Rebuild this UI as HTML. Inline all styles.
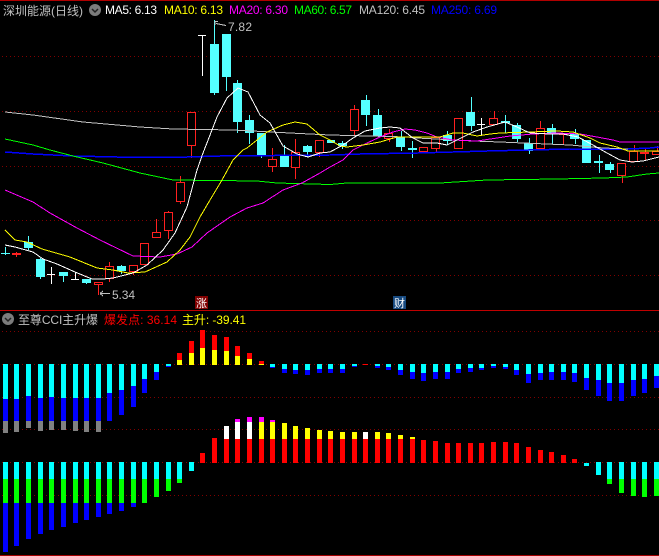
<!DOCTYPE html>
<html lang="zh">
<head>
<meta charset="utf-8">
<title>深圳能源</title>
<style>
html,body{margin:0;padding:0;background:#000;width:659px;height:556px;overflow:hidden}
svg{display:block}
text{font-family:"Liberation Sans","WenQuanYi Zen Hei","Noto Sans CJK SC",sans-serif;font-size:12px}
</style>
</head>
<body>
<svg width="659" height="556" viewBox="0 0 659 556" xmlns="http://www.w3.org/2000/svg">
<rect width="659" height="556" fill="#000"/>
<!-- grid -->
<g stroke="#800000" stroke-width="1" stroke-dasharray="1 3" shape-rendering="crispEdges">
<path d="M2 56.500H659M2 111.500H659M2 166.500H659M2 220.500H659M2 275.500H659M2 331.500H659M2 364.500H659M2 397.500H659M2 429.500H659M2 462.500H659M2 495.500H659"/>
</g>
<rect x="0" y="0" width="659" height="1" fill="#b00000"/>
<rect x="0" y="310" width="659" height="1" fill="#c00000"/>
<rect x="0" y="555" width="659" height="1" fill="#a00000"/>

<!-- lower panel A -->
<g shape-rendering="crispEdges">
<path fill="#808080" d="M3 421h5v12h-5zM14 421h5v11h-5zM26 421h5v7h-5zM38 421h5v10h-5zM49 421h5v9h-5zM61 421h5v9h-5zM73 421h5v10h-5zM84 421h5v11h-5zM96 421h5v11h-5z"/>
<path fill="#00ffff" d="M3 364h5v35h-5zM14 364h5v35h-5zM26 364h5v32h-5zM38 364h5v34h-5zM49 364h5v33h-5zM61 364h5v34h-5zM73 364h5v34h-5zM84 364h5v34h-5zM96 364h5v34h-5zM107 364h5v29h-5zM119 364h5v26h-5zM131 364h5v22h-5zM142 364h5v15h-5zM154 364h5v8h-5zM166 364h5v2h-5zM270 364h5v3h-5zM282 364h5v5h-5zM293 364h5v6h-5zM305 364h5v6h-5zM317 364h5v5h-5zM328 364h5v5h-5zM340 364h5v5h-5zM352 364h5v2h-5zM375 364h5v2h-5zM386 364h5v3h-5zM398 364h5v6h-5zM410 364h5v8h-5zM421 364h5v9h-5zM433 364h5v8h-5zM445 364h5v8h-5zM456 364h5v5h-5zM468 364h5v4h-5zM479 364h5v4h-5zM491 364h5v2h-5zM503 364h5v3h-5zM514 364h5v6h-5zM526 364h5v10h-5zM538 364h5v9h-5zM549 364h5v8h-5zM561 364h5v8h-5zM572 364h5v9h-5zM584 364h5v14h-5zM596 364h5v16h-5zM607 364h5v19h-5zM619 364h5v19h-5zM631 364h5v16h-5zM642 364h5v15h-5zM654 364h5v12h-5z"/>
<path fill="#0000ff" d="M3 399h5v22h-5zM14 399h5v22h-5zM26 396h5v25h-5zM38 398h5v23h-5zM49 397h5v24h-5zM61 398h5v23h-5zM73 398h5v23h-5zM84 398h5v23h-5zM96 398h5v23h-5zM107 393h5v28h-5zM119 390h5v25h-5zM131 386h5v21h-5zM142 379h5v14h-5zM154 372h5v8h-5zM166 366h5v1h-5zM270 367h5v1h-5zM282 369h5v4h-5zM293 370h5v4h-5zM305 370h5v5h-5zM317 369h5v4h-5zM328 369h5v4h-5zM340 369h5v4h-5zM352 366h5v1h-5zM375 366h5v2h-5zM386 367h5v3h-5zM398 370h5v5h-5zM410 372h5v7h-5zM421 373h5v8h-5zM433 372h5v7h-5zM445 372h5v7h-5zM456 369h5v4h-5zM468 368h5v4h-5zM479 368h5v2h-5zM491 366h5v2h-5zM503 367h5v2h-5zM514 370h5v5h-5zM526 374h5v9h-5zM538 373h5v7h-5zM549 372h5v8h-5zM561 372h5v8h-5zM572 373h5v9h-5zM584 378h5v12h-5zM596 380h5v16h-5zM607 383h5v18h-5zM619 383h5v18h-5zM631 380h5v16h-5zM642 379h5v14h-5zM654 376h5v12h-5z"/>
<path fill="#ff0000" d="M177 353h5v7h-5zM189 341h5v12h-5zM200 330h5v18h-5zM212 335h5v15h-5zM224 337h5v14h-5zM235 346h5v10h-5zM247 353h5v6h-5zM259 361h5v3h-5zM363 364h5v1h-5z"/>
<path fill="#ffff00" d="M177 360h5v5h-5zM189 353h5v12h-5zM200 348h5v17h-5zM212 350h5v15h-5zM224 351h5v14h-5zM235 356h5v9h-5zM247 359h5v6h-5zM259 364h5v1h-5z"/>
<!-- lower panel B -->
<path fill="#00ffff" d="M3 462h5v17h-5zM14 462h5v17h-5zM26 462h5v17h-5zM38 462h5v17h-5zM49 462h5v17h-5zM61 462h5v17h-5zM73 462h5v17h-5zM84 462h5v17h-5zM96 462h5v17h-5zM107 462h5v17h-5zM119 462h5v17h-5zM131 462h5v17h-5zM142 462h5v17h-5zM154 462h5v17h-5zM166 462h5v17h-5zM177 462h5v17h-5zM189 462h5v9h-5zM584 463h5v3h-5zM596 462h5v13h-5zM607 462h5v17h-5zM619 462h5v17h-5zM631 462h5v17h-5zM642 462h5v17h-5zM654 462h5v17h-5z"/>
<path fill="#00ff00" d="M3 479h5v24h-5zM14 479h5v24h-5zM26 479h5v24h-5zM38 479h5v24h-5zM49 479h5v24h-5zM61 479h5v24h-5zM73 479h5v24h-5zM84 479h5v24h-5zM96 479h5v24h-5zM107 479h5v24h-5zM119 479h5v24h-5zM131 479h5v24h-5zM142 479h5v24h-5zM154 479h5v18h-5zM166 479h5v12h-5zM177 479h5v4h-5zM607 479h5v5h-5zM619 479h5v14h-5zM631 479h5v17h-5zM642 479h5v18h-5zM654 479h5v17h-5z"/>
<path fill="#0000ff" d="M3 503h5v49h-5zM14 503h5v43h-5zM26 503h5v36h-5zM38 503h5v31h-5zM49 503h5v27h-5zM61 503h5v24h-5zM73 503h5v20h-5zM84 503h5v17h-5zM96 503h5v14h-5zM107 503h5v11h-5zM119 503h5v8h-5zM131 503h5v4h-5z"/>
<path fill="#ff0000" d="M200 453h5v10h-5zM212 438h5v25h-5zM224 439h5v24h-5zM235 439h5v24h-5zM247 439h5v24h-5zM259 439h5v24h-5zM270 439h5v24h-5zM282 439h5v24h-5zM293 439h5v24h-5zM305 439h5v24h-5zM317 439h5v24h-5zM328 439h5v24h-5zM340 439h5v24h-5zM352 439h5v24h-5zM363 439h5v24h-5zM375 439h5v24h-5zM386 439h5v24h-5zM398 439h5v24h-5zM410 439h5v24h-5zM421 440h5v23h-5zM433 441h5v22h-5zM445 443h5v20h-5zM456 443h5v20h-5zM468 443h5v20h-5zM479 443h5v20h-5zM491 442h5v21h-5zM503 442h5v21h-5zM514 443h5v20h-5zM526 447h5v16h-5zM538 450h5v13h-5zM549 452h5v11h-5zM561 455h5v8h-5zM572 459h5v4h-5z"/>
<path fill="#ffffff" d="M224 426h5v13h-5zM235 422h5v17h-5zM247 422h5v17h-5zM363 432h5v7h-5z"/>
<path fill="#ff00ff" d="M235 419h5v3h-5zM247 417h5v5h-5zM259 417h5v5h-5zM270 420h5v2h-5z"/>
<path fill="#ffff00" d="M259 422h5v17h-5zM270 422h5v17h-5zM282 423h5v16h-5zM293 426h5v13h-5zM305 428h5v11h-5zM317 430h5v9h-5zM328 431h5v8h-5zM340 432h5v7h-5zM352 432h5v7h-5zM375 432h5v7h-5zM386 433h5v6h-5zM398 435h5v4h-5zM410 437h5v2h-5z"/>
</g>

<!-- candles -->
<g shape-rendering="crispEdges">
<!-- cyan wicks + bodies -->
<path fill="none" stroke="#54ffff" stroke-width="1" d="M28.500 236V250M40.500 258V279M63.500 276V282M86.500 283V284M214.500 20V95M226.500 77V91M237.500 80V133M249.500 115V144M261.500 156V158M284.500 145V156M307.500 145V157M342.500 141V149M338 144.500H347M1 253.500H10M5.500 247V255M366.500 95V126M378.500 109V137M401.500 131V151M412.500 141V158M471.500 97V131M505.500 115V133M517.500 123V142M529.500 138V154M552.500 124V144M575.500 129V144M599.500 155V173M610.500 162V173M447.500 131V145M121.500 265V274"/>
<path fill="#54ffff" d="M24 242h9v6h-9zM36 259h9v18h-9zM59 272h9v4h-9zM82 279h9v4h-9zM117 266h9v5h-9zM210 44h9v49h-9zM222 34h9v43h-9zM233 83h9v39h-9zM245 120h9v13h-9zM257 133h9v23h-9zM280 156h9v11h-9zM303 146h9v6h-9zM327 140h8v3h-8zM338 143h9v3h-9zM361 100h9v15h-9zM373 115h9v21h-9zM396 137h9v10h-9zM408 148h9v2h-9zM443 135h9v6h-9zM466 112h9v14h-9zM501 121h9v2h-9zM512 125h9v14h-9zM524 143h9v8h-9zM547 128h9v5h-9zM570 134h9v5h-9zM582 140h9v23h-9zM594 161h9v2h-9zM605 164h9v6h-9z"/>
<!-- white -->
<path fill="none" stroke="#ffffff" stroke-width="1" d="M47 274.500H55M51.500 267V284M71 279.500H79M75.500 272V279M198 35.500H206M202.500 35V76M477 124.500H485M481.500 118V135"/>
<!-- red wicks -->
<path fill="none" stroke="#ff2020" stroke-width="1" d="M98.500 285V295M109.500 262V266M109.500 279V282M133.500 272V275M156.500 219V232M168.500 211V212M168.500 231V239M180.500 176V182M180.500 202V204M191.500 146V158M272.500 148V159M272.500 167V172M295.500 139V152M295.500 168V179M319.500 153V157M354.500 105V109M354.500 131V135M389.500 129V133M389.500 139V142M436.500 149V152M494.500 111V118M540.500 121V128M563.500 135V144M622.500 176V183M634.500 145V151M645.500 149V152M645.500 154V160M657.500 146V151"/>
<!-- red hollow -->
<path fill="#000" stroke="#ff2020" stroke-width="1" d="M94.500 282.500h8v2h-8zM105.500 266.500h8v12h-8zM129.500 265.500h8v6h-8zM140.500 243.500h8v21h-8zM152.500 232.500h8v5h-8zM164.500 212.500h8v18h-8zM176.500 182.500h8v19h-8zM187.500 112.500h8v33h-8zM268.500 159.500h8v7h-8zM291.500 152.500h8v15h-8zM315.500 140.500h8v12h-8zM350.500 109.500h8v21h-8zM384.500 133.500h8v5h-8zM419.500 147.500h8v4h-8zM431.500 137.500h8v11h-8zM454.500 118.500h8v30h-8zM489.500 118.500h8v6h-8zM536.500 128.500h8v20h-8zM617.500 163.500h8v12h-8zM629.500 151.500h8v10h-8zM640.500 152.500h8v1h-8zM652.500 151.500h7v3h-7z"/>
<path fill="#ff2020" d="M12 253h9v2h-9zM16 252h1v5h-1zM559 133h9v2h-9z"/>
</g>

<!-- moving averages -->
<g fill="none" stroke-width="1" shape-rendering="crispEdges">
<polyline stroke="#0000ff" stroke-width="1.500" points="5,152 33,154 73,156 117,157 187,157 220,156 330,155 360,154 418,153 453,152 487,151 570,149 628,149 650,148 659,147"/>
<polyline stroke="#00ff00" points="5,139 33,145 50,150 73,156 103,163 140,173 173,180 257,181 277,183 330,184.500 347,183 440,183 487,180 557,179 603,178 627,177 647,174 659,173"/>
<polyline stroke="#c0c0c0" points="5,112 33,115 83,122 140,127 173,129 233,130 290,133 330,135 407,137 417,138 473,141 500,142 523,143 570,145 603,148 628,149"/>
<polyline stroke="#ff00ff" points="5,190 33,202 50,213 77,228 100,240 133,256 160,257 177,254 192,247 207,233 230,217 247,208 263,203 283,190 302,183 320,173 330,167 343,160 353,150 367,143 380,137 393,132 405,129 415,130 427,133 437,137 453,140 477,141 497,138 510,136 533,134 557,133 580,134 597,137 613,140 620,142 659,142"/>
<polyline stroke="#ffff00" points="5,230 15,240 27,242 42,249 70,257 97,268 113,270 128,273 145,272 167,262 180,250 190,237 200,217 210,200 222,180 233,160 243,150 247,148 267,132 283,125 295,122 307,124 320,135 330,140 340,146 347,147 363,145 380,142 397,137 418,137 440,137 453,133 463,133 477,136 490,134 500,133 530,132 557,131 573,132 590,138 600,143 617,147 628,151 659,151"/>
<polyline stroke="#ffffff" points="5,245 15,247 33,252 43,259 57,264 75,272 92,279 103,279 113,278 133,273 147,265 163,250 175,233 187,207 197,170 203,153 205,148 217,117 227,98 238,88 248,92 260,115 270,123 283,146 290,150 297,154 308,157 320,153 330,152 343,145 353,138 365,131 380,128 390,127 400,128 413,138 423,143 437,143 447,145 457,140 473,132 487,127 505,122 517,127 530,133 550,134 563,134 578,137 593,145 607,153 620,160 632,162 643,161 659,157"/>
</g>

<!-- price annotations -->
<g fill="none" stroke="#c0c0c0" stroke-width="1" shape-rendering="crispEdges">
<path d="M215 21.500H218M215 21V25M216 23.500L226 25.500"/>
<path d="M100 293.500H110M100 293.500L103 291M100 293.500L103 296"/>
</g>
<text x="228" y="31" fill="#c0c0c0" textLength="24" lengthAdjust="spacing">7.82</text>
<text x="112" y="299" fill="#c0c0c0" textLength="23" lengthAdjust="spacing">5.34</text>

<rect x="195" y="296" width="13" height="13" fill="#800000"/>
<text x="196" y="307" fill="#fff" style="font-size:11px">涨</text>
<rect x="393" y="296" width="13" height="13" fill="#174a80"/>
<text x="394" y="307" fill="#fff" style="font-size:11px">财</text>

<!-- header -->
<text x="3" y="15" fill="#c0c0c0" textLength="80" lengthAdjust="spacing">深圳能源(日线)</text>
<circle cx="95" cy="10" r="6" fill="#7c7c7c"/>
<path d="M92 9l3 3 3-3" fill="none" stroke="#222" stroke-width="1.500"/>
<text x="105" y="14" fill="#ffffff" textLength="52" lengthAdjust="spacing">MA5: 6.13</text>
<text x="164" y="14" fill="#ffff00" textLength="59" lengthAdjust="spacing">MA10: 6.13</text>
<text x="229" y="14" fill="#ff00ff" textLength="59" lengthAdjust="spacing">MA20: 6.30</text>
<text x="294" y="14" fill="#00ff00" textLength="58" lengthAdjust="spacing">MA60: 6.57</text>
<text x="359" y="14" fill="#c0c0c0" textLength="66" lengthAdjust="spacing">MA120: 6.45</text>
<text x="431" y="14" fill="#0000ff" textLength="66" lengthAdjust="spacing">MA250: 6.69</text>

<circle cx="8" cy="319" r="6" fill="#7c7c7c"/>
<path d="M5 318l3 3 3-3" fill="none" stroke="#222" stroke-width="1.500"/>
<text x="18" y="324" fill="#c0c0c0" textLength="80" lengthAdjust="spacing">至尊CCI主升爆</text>
<text x="104" y="324" fill="#ff0000" textLength="73" lengthAdjust="spacing">爆发点: 36.14</text>
<text x="182" y="324" fill="#ffff00" textLength="64" lengthAdjust="spacing">主升: -39.41</text>
</svg>
</body>
</html>
